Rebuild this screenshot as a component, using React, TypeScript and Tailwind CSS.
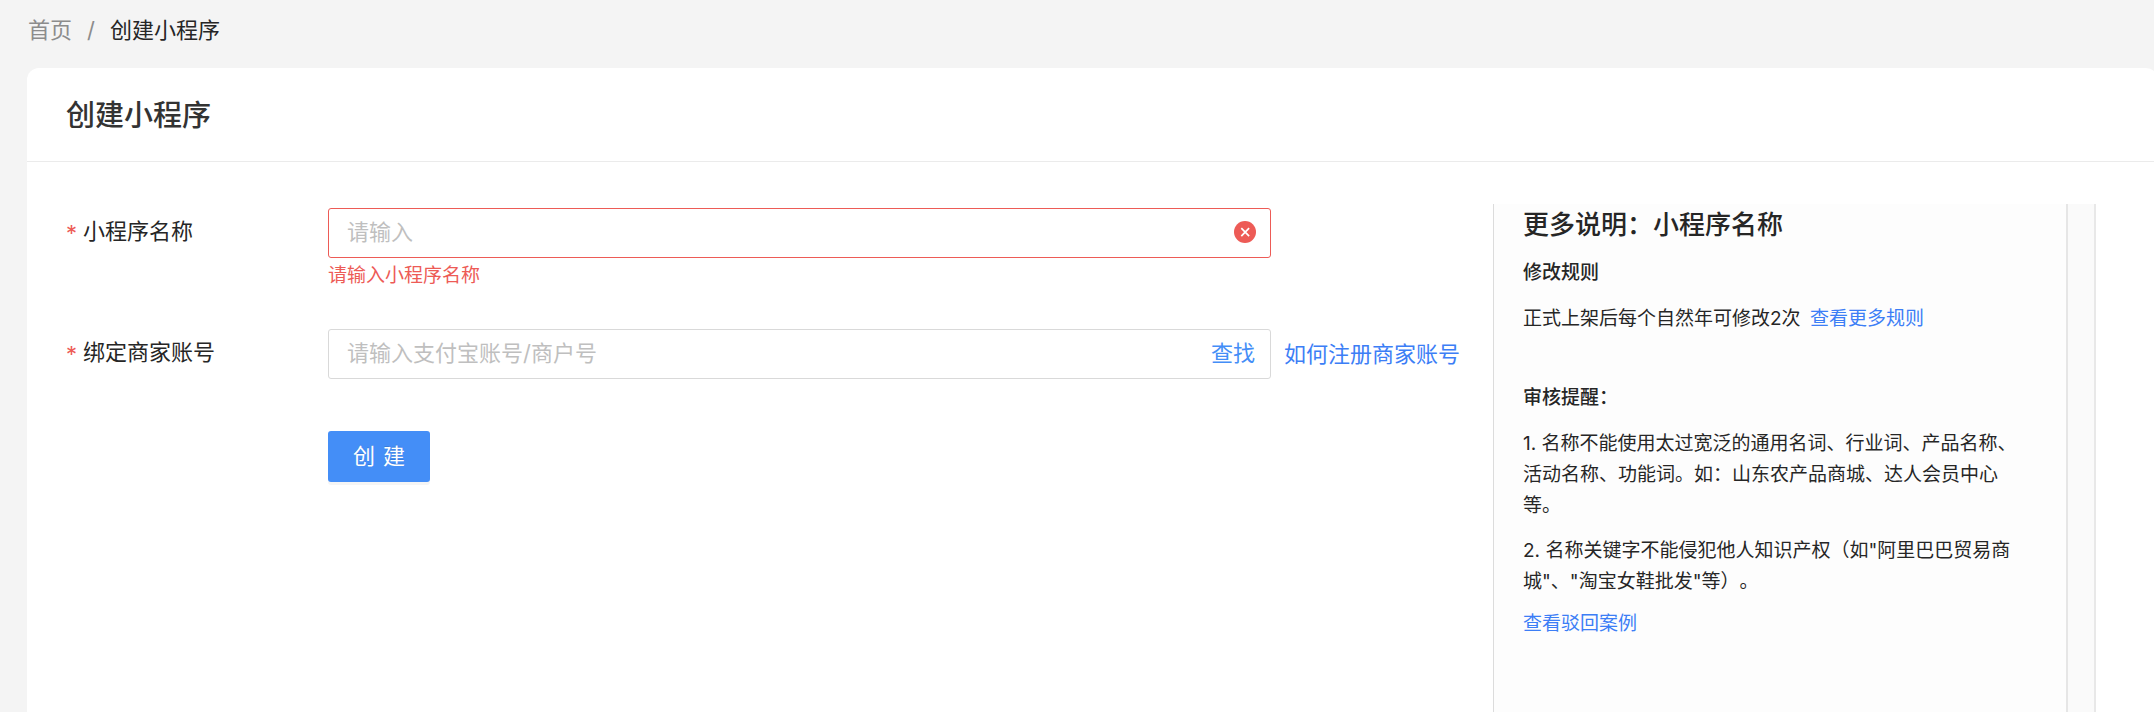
import { useState } from "react";

function ErrorIcon() {
  return (
    <svg viewBox="0 0 22 22" className="size-[22px] shrink-0" aria-hidden="true">
      <circle cx="11" cy="11" r="11" fill="#ed5b56" />
      <path d="M7.3 7.1l7.8 8M15.1 7.1l-7.8 8" stroke="#fff" strokeWidth="1.7" fill="none" />
    </svg>
  );
}

function FieldLabel({ htmlFor, children }: { htmlFor: string; children: string }) {
  return (
    <label htmlFor={htmlFor} className="flex h-[46px] items-center gap-[6px]">
      <span className="w-[11px] pt-1 text-[22px] text-[#ed5b56]">*</span>
      {children}
    </label>
  );
}

function MoreInfo() {
  return (
    <aside className="flex w-[603px] shrink-0 border-r-2 border-[#e8e8e8]">
      <div className="flex-1 border-r-2 border-l border-r-[#e6e6e6] border-l-[#dcdcdc] bg-[#fdfdfd] pr-[44px] pl-[29px] text-[19px] leading-[31px] [text-spacing-trim:space-all]">
        <h2 className="text-[26px] leading-[42px] font-medium">更多说明：小程序名称</h2>
        <h3 className="mt-[11px] font-medium">修改规则</h3>
        <p className="mt-[15px]">
          正式上架后每个自然年可修改2次{" "}
          <a href="#rules" className="ml-1 text-[#3c7ef6]">
            查看更多规则
          </a>
        </p>
        <h3 className="mt-12 font-medium">审核提醒：</h3>
        <p className="mt-[15px]">
          1. 名称不能使用太过宽泛的通用名词、行业词、产品名称、活动名称、功能词。如：山东农产品商城、达人会员中心等。
        </p>
        <p className="mt-[14px]">
          2. 名称关键字不能侵犯他人知识产权（如"阿里巴巴贸易商城"、"淘宝女鞋批发"等）。
        </p>
        <a href="#cases" className="mt-[11px] inline-block text-[#3c7ef6]">
          查看驳回案例
        </a>
      </div>
      <div className="w-[26px] bg-[#fafafa]" />
    </aside>
  );
}

export default function App() {
  const [name, setName] = useState("");
  const [account, setAccount] = useState("");

  return (
    <div className="flex min-h-screen flex-col overflow-hidden bg-[#f4f4f4] font-['Inter','Noto_Sans_CJK_SC',sans-serif] text-[22px] leading-8 text-[#262626]">
      <nav className="flex h-[60px] items-center pl-7 text-[#8c8c8c]">
        <a href="#home">首页</a>
        <span className="mx-[15px]">/</span>
        <span className="text-[#262626]">创建小程序</span>
      </nav>

      <main className="mt-2 -mr-1 ml-[27px] flex flex-1 flex-col rounded-t-xl bg-white">
        <header className="flex h-[94px] items-center border-b border-[#ebebeb] pt-[2px] pl-[39px]">
          <h1 className="text-[29px] leading-10 font-medium text-[#333]">创建小程序</h1>
        </header>

        <div className="flex flex-1 pt-[42px] pr-[62px] pl-[39px]">
          <form
            noValidate
            onSubmit={(e) => e.preventDefault()}
            className="grid flex-1 grid-cols-[262px_1fr_222px] content-start pt-1"
          >
            <FieldLabel htmlFor="name">小程序名称</FieldLabel>
            <div className="h-[121px]">
              <div className="flex h-[50px] items-center rounded-[3px] border border-[#ed5b56] pr-[14px] pb-[2px] pl-[18px]">
                <input
                  id="name"
                  value={name}
                  onChange={(e) => setName(e.target.value)}
                  placeholder="请输入"
                  aria-invalid="true"
                  aria-describedby="name-error"
                  className="min-w-0 flex-1 outline-none placeholder:text-[#bfbfbf]"
                />
                <ErrorIcon />
              </div>
              <p id="name-error" className="mt-[2px] text-[19px] text-[#ed5b56]">
                请输入小程序名称
              </p>
            </div>
            <div />

            <FieldLabel htmlFor="account">绑定商家账号</FieldLabel>
            <div className="flex h-[50px] items-center rounded-[3px] border border-[#d9d9d9] pr-[15px] pb-[2px] pl-[18px]">
              <input
                id="account"
                value={account}
                onChange={(e) => setAccount(e.target.value)}
                placeholder="请输入支付宝账号/商户号"
                className="min-w-0 flex-1 outline-none placeholder:text-[#bfbfbf]"
              />
              <button type="button" className="text-[#448ef7]">
                查找
              </button>
            </div>
            <a href="#register" className="flex h-[50px] items-center pl-[13px] text-[#3c7ef6]">
              如何注册商家账号
            </a>

            <button
              type="submit"
              className="col-start-2 mt-[52px] flex h-[51px] w-[102px] items-center justify-center gap-2 rounded-[3px] bg-[#448ef7] pb-[2px] text-white shadow-[0_3px_0_rgba(0,0,0,0.04)] text-shadow-[0_-1px_0_rgba(0,0,0,0.12)]"
            >
              <span>创</span>
              <span>建</span>
            </button>
          </form>
          <MoreInfo />
        </div>
      </main>
    </div>
  );
}
